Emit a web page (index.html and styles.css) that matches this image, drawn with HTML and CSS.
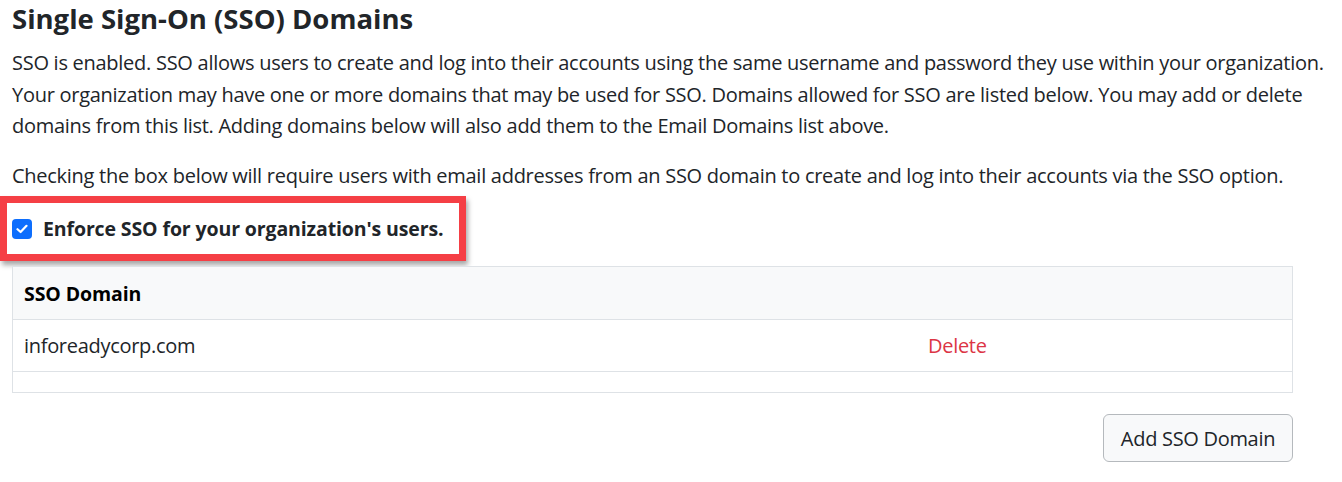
FILE: index.html
```html
<!DOCTYPE html>
<html lang="en">
<head>
<meta charset="utf-8">
<title>SSO Domains</title>
<link rel="stylesheet" href="styles.css">
</head>
<body>
<div class="page">
  <h4 class="title">Single Sign-On (SSO) Domains</h4>
  <p class="para">SSO is enabled. SSO allows users to create and log into their accounts using the same username and password they use within your organization. Your organization may have one or more domains that may be used for SSO. Domains allowed for SSO are listed below. You may add or delete domains from this list. Adding domains below will also add them to the Email Domains list above.</p>
  <p class="para para2">Checking the box below will require users with email addresses from an SSO domain to create and log into their accounts via the SSO option.</p>
  <div class="highlight">
    <label class="check">
      <span class="box"><svg width="12" height="10" viewBox="0 0 12 10"><path d="M1.5 5.2 L4.6 8 L10.5 1.8" fill="none" stroke="#fff" stroke-width="2.2" stroke-linecap="round" stroke-linejoin="round"/></svg></span>
      <span class="check-label">Enforce SSO for your organization's users.</span>
    </label>
  </div>
  <div class="table-wrap">
    <table class="tbl">
      <thead>
        <tr><th class="col-domain">SSO Domain</th><th></th></tr>
      </thead>
      <tbody>
        <tr><td class="col-domain">inforeadycorp.com</td><td><span class="del">Delete</span></td></tr>
        <tr class="empty"><td></td><td></td></tr>
      </tbody>
    </table>
    <div class="actions">
      <button class="btn">Add SSO Domain</button>
    </div>
  </div>
</div>
</body>
</html>
```

FILE: styles.css
```css
html, body {
  margin: 0;
  padding: 0;
  background: #fff;
}
body {
  font-family: "Open Sans", "Noto Sans", sans-serif;
  color: #212529;
  font-size: 20px;
}
.page {
  padding: 3px 0 0 0;
  width: 1342px;
}
.title {
  margin: 0 0 12px 12px;
  font-size: 27.5px;
  line-height: 32px;
  font-weight: 700;
  letter-spacing: 0;
}
.para {
  margin: 0 0 18px 12px;
  width: 1325px;
  line-height: 31.5px;
  letter-spacing: -0.27px;
}
.para2 {
  margin-bottom: 5px;
}
.highlight {
  width: 447px;
  height: 51px;
  border: 7px solid #f53f45;
  box-shadow: 2px 4px 5px rgba(0,0,0,0.35);
  display: flex;
  align-items: center;
  padding-left: 5px;
  box-sizing: content-box;
}
.check {
  display: flex;
  align-items: center;
  gap: 11px;
}
.box {
  width: 20px;
  height: 20px;
  border-radius: 4px;
  background: #0d6efd;
  display: flex;
  align-items: center;
  justify-content: center;
}
.check-label {
  font-weight: 700;
  font-size: 19.5px;
  letter-spacing: -0.12px;
  color: #212529;
}
.table-wrap {
  margin: 5px 0 0 12px;
  width: 1281px;
}
.tbl {
  width: 100%;
  border-collapse: collapse;
  border: 1px solid #dee2e6;
}
.tbl th {
  background: #f8f9fa;
  text-align: left;
  font-weight: 700;
  color: #000;
  height: 52px;
  padding: 0 11px;
  letter-spacing: -0.1px;
  font-size: 19.5px;
  border-bottom: 1px solid #dee2e6;
}
.tbl td {
  height: 51px;
  padding: 0 11px;
  border-bottom: 1px solid #dee2e6;
  letter-spacing: -0.3px;
}
.col-domain {
  width: 882px;
}
.tbl tr.empty td {
  height: 20px;
  padding: 0;
  border-bottom: none;
}
.del {
  color: #dc3545;
}
.actions {
  display: flex;
  justify-content: flex-end;
  margin-top: 21px;
}
.btn {
  font-family: inherit;
  font-size: 20px;
  letter-spacing: -0.3px;
  color: #212529;
  background: #f8f9fa;
  border: 1px solid #b5b9bd;
  border-radius: 6px;
  width: 190px;
  height: 48px;
  padding: 0;
}
```
